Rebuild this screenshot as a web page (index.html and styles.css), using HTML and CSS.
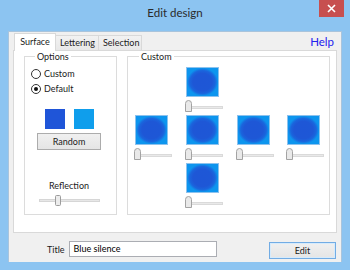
FILE: index.html
```html
<!DOCTYPE html>
<html lang="en">
<head>
  <meta charset="UTF-8">
  <meta name="viewport" content="width=device-width, initial-scale=1.0">
  <title>Edit design</title>
  <link rel="stylesheet" href="styles.css">
</head>
<body>
  <div class="window">
    <div class="titlebar">
      <span></span>
      <div class="caption">Edit design</div>
      <div class="close">
        <svg width="9" height="9" viewBox="0 0 9 9"><path d="M1 1 L8 8 M8 1 L1 8" stroke="#fff" stroke-width="1.6"/></svg>
      </div>
    </div>

    <div class="client">
      <div class="tabbar">
        <div class="tab active">Surface</div>
        <div class="tab">Lettering</div>
        <div class="tab">Selection</div>
        <div class="help">Help</div>
      </div>

      <div class="panel">
        <fieldset class="group options">
          <legend>Options</legend>
          <div class="radio-row"><span class="radio"></span>Custom</div>
          <div class="radio-row"><span class="radio checked"></span>Default</div>
          <div class="swatches">
            <div class="swatch dark"></div>
            <div class="swatch light"></div>
          </div>
          <button class="button random">Random</button>
          <div class="label">Reflection</div>
          <svg class="hslider" width="61" height="11" viewBox="0 0 61 11">
            <rect x="0.5" y="4.5" width="60" height="2" fill="#e7e7e7" stroke="#d6d6d6"/>
            <rect x="16.5" y="0.5" width="5" height="10" rx="1" fill="#ececec" stroke="#9c9c9c"/>
          </svg>
        </fieldset>

        <fieldset class="group custom">
          <legend>Custom</legend>
          <div class="grid">
            <div class="cell c2 r1">
              <div class="blob"></div>
              <svg class="slider" width="38" height="12" viewBox="0 0 38 12"><rect x="6.5" y="6.5" width="31" height="2" fill="#e9e9e9" stroke="#dadada"/><path d="M0.5 11.5 V3.5 Q0.5 0.5 3.5 0.5 Q6.5 0.5 6.5 3.5 V11.5 Z" fill="#e9e9e9" stroke="#a3a3a3"/></svg>
            </div>
            <div class="cell c1 r2">
              <div class="blob"></div>
              <svg class="slider" width="38" height="12" viewBox="0 0 38 12"><rect x="6.5" y="6.5" width="31" height="2" fill="#e9e9e9" stroke="#dadada"/><path d="M0.5 11.5 V3.5 Q0.5 0.5 3.5 0.5 Q6.5 0.5 6.5 3.5 V11.5 Z" fill="#e9e9e9" stroke="#a3a3a3"/></svg>
            </div>
            <div class="cell c2 r2">
              <div class="blob"></div>
              <svg class="slider" width="38" height="12" viewBox="0 0 38 12"><rect x="6.5" y="6.5" width="31" height="2" fill="#e9e9e9" stroke="#dadada"/><path d="M0.5 11.5 V3.5 Q0.5 0.5 3.5 0.5 Q6.5 0.5 6.5 3.5 V11.5 Z" fill="#e9e9e9" stroke="#a3a3a3"/></svg>
            </div>
            <div class="cell c3 r2">
              <div class="blob"></div>
              <svg class="slider" width="38" height="12" viewBox="0 0 38 12"><rect x="6.5" y="6.5" width="31" height="2" fill="#e9e9e9" stroke="#dadada"/><path d="M0.5 11.5 V3.5 Q0.5 0.5 3.5 0.5 Q6.5 0.5 6.5 3.5 V11.5 Z" fill="#e9e9e9" stroke="#a3a3a3"/></svg>
            </div>
            <div class="cell c4 r2">
              <div class="blob"></div>
              <svg class="slider" width="38" height="12" viewBox="0 0 38 12"><rect x="6.5" y="6.5" width="31" height="2" fill="#e9e9e9" stroke="#dadada"/><path d="M0.5 11.5 V3.5 Q0.5 0.5 3.5 0.5 Q6.5 0.5 6.5 3.5 V11.5 Z" fill="#e9e9e9" stroke="#a3a3a3"/></svg>
            </div>
            <div class="cell c2 r3">
              <div class="blob"></div>
              <svg class="slider" width="38" height="12" viewBox="0 0 38 12"><rect x="6.5" y="6.5" width="31" height="2" fill="#e9e9e9" stroke="#dadada"/><path d="M0.5 11.5 V3.5 Q0.5 0.5 3.5 0.5 Q6.5 0.5 6.5 3.5 V11.5 Z" fill="#e9e9e9" stroke="#a3a3a3"/></svg>
            </div>
          </div>
        </fieldset>
      </div>

      <div class="bottom">
        <span class="title-label">Title</span>
        <div class="input">Blue silence</div>
        <button class="button edit">Edit</button>
      </div>
    </div>
  </div>
</body>
</html>
```

FILE: styles.css
```css
body {
  margin: 0;
  padding: 0;
  background-color: #8cc4f1;
  font-family: 'Lato', 'Liberation Sans', sans-serif;
  font-size: 9px;
  color: #1b1b1b;
}
.window {
  width: 350px;
  height: 270px;
  background-color: #8cc4f1;
  overflow: hidden;
}
.titlebar {
  height: 31px;
  display: grid;
  grid-template-columns: 1fr auto 1fr;
}
.caption {
  font-size: 11.5px;
  color: #2a2a2a;
  margin-top: 6px;
}
.close {
  justify-self: end;
  width: 25px;
  height: 17px;
  margin-right: 6px;
  background-color: #c74f4f;
  display: flex;
  align-items: center;
  justify-content: center;
}
.client {
  margin: 0 8px;
  height: 231px;
  box-sizing: border-box;
  background-color: #f0f0f0;
  border: 1px solid #a9c4dc;
  border-bottom: none;
}

/* tabs */
.tabbar {
  display: flex;
  align-items: flex-end;
  height: 19px;
  padding-left: 5px;
  margin-bottom: -1px;
}
.tab {
  height: 15px;
  box-sizing: border-box;
  border: 1px solid #d9d9d9;
  border-bottom: none;
  background: linear-gradient(#f2f2f2, #e8e8e8);
  padding: 0 4px;
  line-height: 14px;
  margin-bottom: 1px;
  margin-left: -1px;
  width: 44px;
  text-align: center;
}
.tab.active {
  position: relative;
  z-index: 1;
  height: 18px;
  width: 42px;
  margin-left: 0;
  margin-bottom: 0;
  background: #fff;
  line-height: 15px;
}
.help {
  margin-left: auto;
  margin-right: 7px;
  align-self: center;
  font-size: 11.5px;
  color: #2222ee;
}
.panel {
  margin: 0 4px;
  height: 183px;
  box-sizing: border-box;
  background-color: #fff;
  border: 1px solid #d9d9d9;
  display: flex;
  gap: 10px;
  padding: 0 6px 0 10px;
}

/* group boxes */
.group {
  margin: 0;
  height: 164px;
  box-sizing: border-box;
  border: 1px solid #dcdcdc;
  padding: 0;
  min-width: 0;
}
.group legend {
  font-size: 9px;
  line-height: 11px;
  padding: 0 2px;
  margin-left: 4px;
}
.options {
  width: 93px;
  display: flex;
  flex-direction: column;
  align-items: center;
  padding: 4px 9px 0 6px;
}
.radio-row {
  align-self: flex-start;
  display: flex;
  align-items: center;
  height: 15px;
}
.radio {
  width: 10px;
  height: 10px;
  box-sizing: border-box;
  border: 1px solid #333;
  border-radius: 50%;
  background: #fff;
  margin-right: 3px;
  display: flex;
  align-items: center;
  justify-content: center;
}
.radio.checked::after {
  content: "";
  width: 4px;
  height: 4px;
  border-radius: 50%;
  background: #111;
}
.swatches {
  display: flex;
  gap: 9px;
  margin-top: 13px;
}
.swatch {
  width: 20px;
  height: 20px;
}
.swatch.dark { background-color: #1f55d8; }
.swatch.light { background-color: #0f9eec; }
.button {
  font-family: inherit;
  font-size: 9px;
  color: #1b1b1b;
  border: 1px solid #acacac;
  background: linear-gradient(#f0f0f0, #e5e5e5);
  padding: 0;
}
.random {
  width: 64px;
  height: 17px;
  margin-top: 4px;
}
.label {
  margin-top: 30px;
  line-height: 11px;
}
.hslider {
  display: block;
  margin-top: 4px;
}
.custom {
  width: 203px;
  padding: 5px 0 0 7px;
}
.grid {
  display: grid;
  grid-template-columns: 51px 51px 50px 33px;
  grid-auto-rows: 45px;
  row-gap: 3px;
}
.c1 { grid-column: 1; }
.c2 { grid-column: 2; }
.c3 { grid-column: 3; }
.c4 { grid-column: 4; }
.r1 { grid-row: 1; }
.r2 { grid-row: 2; }
.r3 { grid-row: 3; }
.blob {
  width: 33px;
  height: 30px;
  box-sizing: border-box;
  border: 1px solid #8cc2ee;
  background: radial-gradient(ellipse closest-side, #1e56d6 0%, #1e57d6 62%, #1a65dd 82%, #0d95ee 100%);
  background-color: #0b9ef2;
}
.slider {
  display: block;
  margin: 3px 0 0 -1px;
}

/* bottom row */
.bottom {
  display: flex;
  align-items: center;
  height: 30px;
  padding: 2px 0 0 38px;
  box-sizing: border-box;
}
.title-label {
  margin-right: 4px;
}
.input {
  width: 148px;
  height: 16px;
  box-sizing: border-box;
  border: 1px solid #abadb3;
  background: #fff;
  padding-left: 4px;
  line-height: 14px;
  color: #000;
}
.edit {
  margin-left: auto;
  margin-right: 5px;
  margin-top: 3px;
  width: 67px;
  height: 17px;
  border-color: #72ace4;
  box-shadow: inset 0 0 0 1px #d6ebfc;
}
```
